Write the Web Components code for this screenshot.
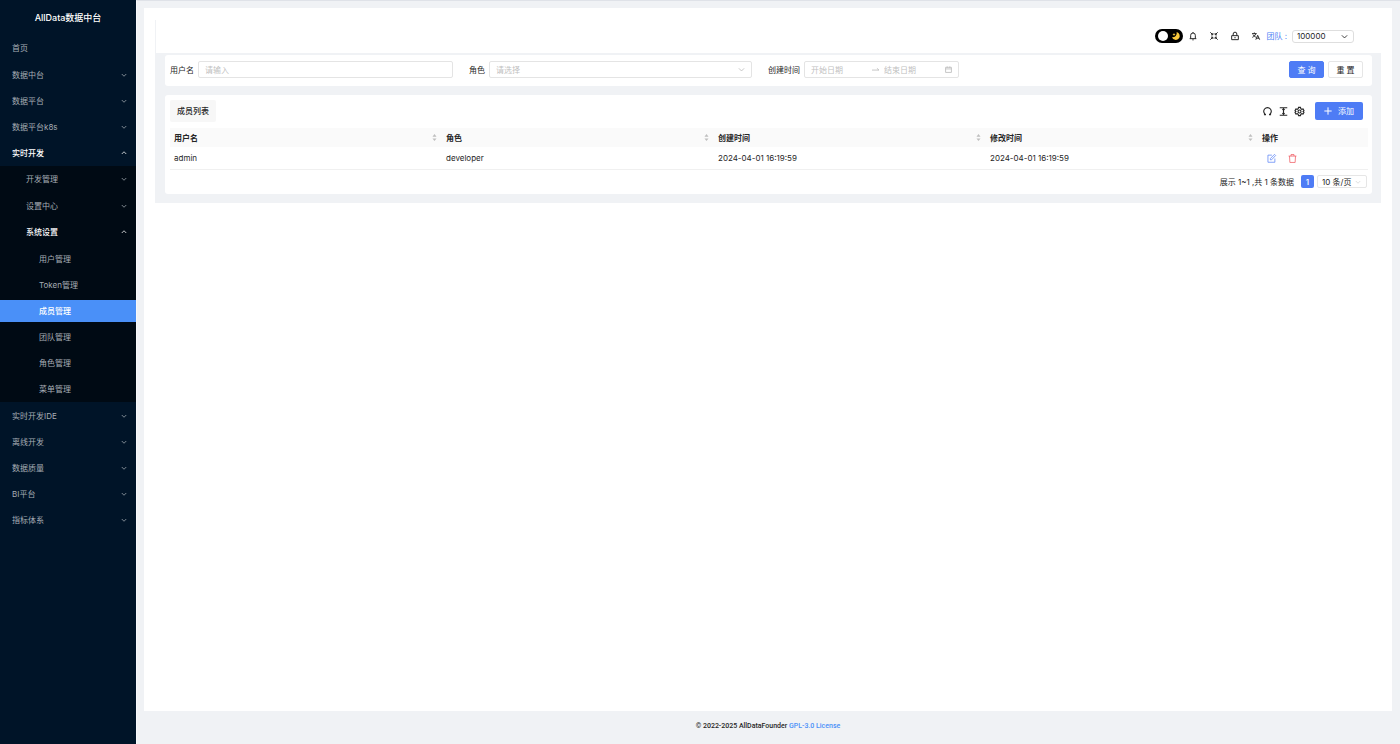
<!DOCTYPE html>
<html lang="zh-CN">
<head>
<meta charset="utf-8">
<title>AllData数据中台</title>
<style>
html, body { margin: 0; min-height: 100%; }
body { font: 8px/12px Inter, "Noto Sans CJK SC", sans-serif; color: #262626; background: #f0f2f5; }
</style>
</head>
<body>
<app-shell>
  <side-menu slot="side"></side-menu>
  <top-bar slot="header"></top-bar>
  <search-form slot="content"></search-form>
  <member-table slot="content"></member-table>
  <page-footer slot="footer"></page-footer>
</app-shell>

<script>
const RESET = `
  *, *::before { box-sizing: border-box; }
  button, input, select { font: inherit; color: inherit; margin: 0; padding: 0; border: 0; background: none; outline: none; }
  button { cursor: pointer; }
  select { appearance: none; cursor: pointer; }
  input::placeholder { color: #bfbfbf; opacity: 1; }
  a { color: inherit; text-decoration: none; }
`;

class BaseElement extends HTMLElement {
  connectedCallback() {
    if (this.shadowRoot) return;
    this.attachShadow({ mode: 'open' });
    const t = document.createElement('template');
    t.innerHTML = `<style>${RESET}${this.styles()}</style>${this.markup()}`;
    this.shadowRoot.append(t.content.cloneNode(true));
  }
  styles() { return ''; }
  markup() { return ''; }
}

const ICONS = {
  down: '<path d="M3 8l9 9 9-9"/>',
  up: '<path d="M3 16l9-9 9 9"/>',
  bell: '<path d="M5 20V10a7 7 0 0 1 14 0v10M2 20h20M10 23.500h4M12 0v3"/>',
  shrink: '<path d="M1 1l7 7M8.500 3v5.500H3M23 1l-7 7M15.500 3v5.500H21M1 23l7-7M8.500 21v-5.500H3M23 23l-7-7M15.500 21v-5.500H21"/>',
  lock: '<path d="M2 11h20v12H2zM6.500 11V6a5.500 5.500 0 0 1 11 0v5M12 15v4"/>',
  translate: '<path d="M0 5h14M7 1.500V5M11.500 5C10 10 6 13.500 1 16M3.500 8c1.500 3.500 4.500 6 8 7.500M11.500 23l5.500-13 6 13M13.500 18.500h7.500"/>',
  refresh: '<path d="M7.500 20.500a10 10 0 1 1 9 0M2.500 20.500h5.500M16 20.500h5.500"/>',
  height: '<path d="M2 2h20M2 22h20M12 4.500v15M9 7.500l3-3 3 3M9 16.500l3 3 3-3"/>',
  gear: '<path d="M9.500 1h5l1 3.600 2.600 1.500 3.400-.9 2.400 4.300L21.500 12l2.400 2.500-2.400 4.300-3.400-.9-2.600 1.500-1 3.600h-5l-1-3.600-2.600-1.500-3.400.9L.1 14.500 2.500 12 .1 9.500l2.400-4.300 3.400.9 2.600-1.500z"/><circle cx="12" cy="12" r="4"/>',
  plus: '<path d="M12 1v22M1 12h22"/>',
  edit: '<path d="M13 3H2.500v19H21V12M9 15.500V12L20 1l3 3-11 11.500z"/>',
  trash: '<path d="M1.500 5.500h21M4 5.500l1 17h14l1-17M8 5.500v-4h8v4"/>',
  calendar: '<path d="M2 4.500h20V22H2zM2 10h20M7.500 1.500v5M16.500 1.500v5"/>',
  swap: '<path d="M0 14h24l-7-6"/>',
  sort: '<path d="M12 0l7 9H5zM12 24l7-9H5z" fill="currentColor" stroke="none"/>',
  moon: '<path d="M14 0A12 12 0 1 1 0 16 13 13 0 0 0 14 0z" fill="#f9c93c" stroke="none"/><path d="M6 3l1.500 3 3 1.500-3 1.500L6 12 4.500 9l-3-1.500 3-1.500z" fill="#f9c93c" stroke="none"/>'
};

customElements.define('ui-icon', class extends BaseElement {
  styles() {
    return `:host { display: inline-flex; flex: none; width: var(--icon-size, 10px); height: var(--icon-size, 10px); pointer-events: none; }
      svg { width: 100%; height: 100%; fill: none; stroke: currentColor; stroke-width: var(--icon-stroke, 2); overflow: visible; }`;
  }
  markup() { return `<svg viewBox="0 0 24 24" aria-hidden="true">${ICONS[this.getAttribute('name')]}</svg>`; }
});

customElements.define('app-shell', class extends BaseElement {
  styles() {
    return `
      :host { display: flex; min-height: 100vh; }
      aside { flex: 0 0 136px; display: flex; background: #001428; }
      .main { flex: 1; min-width: 0; display: flex; flex-direction: column; border-top: 1px solid #dfe2e8; border-left: 1px solid #f8f9fb; padding: 7px 8px 0 7px; }
      main { flex: 1; background: #fff; padding: 12px 11px; }
      .block { background: #f0f2f5; padding: 2px 9px 9px 10px; display: flex; flex-direction: column; gap: 9px; }`;
  }
  markup() {
    return `<aside><slot name="side"></slot></aside>
      <div class="main"><main><slot name="header"></slot><div class="block"><slot name="content"></slot></div></main>
      <slot name="footer"></slot></div>`;
  }
});

customElements.define('menu-item', class extends BaseElement {
  styles() {
    return `
      :host { display: block; padding: 2px 0; }
      a { display: flex; align-items: center; justify-content: space-between; height: 22px; padding: 0 9px 0 var(--indent, 12px); color: #a6adb4; }
      :host([open]) a { color: #fff; font-weight: 500; }
      :host([active]) a { color: #fff; background: #4a90f8; font-weight: 500; }
      ui-icon { --icon-size: 6px; --icon-stroke: 3; }`;
  }
  markup() {
    const arrow = this.getAttribute('arrow');
    return `<a href="#"><slot></slot>${arrow ? `<ui-icon name="${arrow}"></ui-icon>` : ''}</a>`;
  }
});

customElements.define('side-menu', class extends BaseElement {
  styles() {
    return `
      :host { display: block; flex: 1; }
      h1 { margin: 0; font-size: 9px; line-height: 35px; font-weight: 500; text-align: center; color: #fff; }
      nav > menu-item:first-child { margin-bottom: 1px; }
      .sub { background: #000a14; margin-bottom: 1px; --indent: 26px; }
      .leaf { padding-top: 1px; --indent: 39px; }
      .sub > menu-item:first-child { margin-bottom: 1px; }`;
  }
  markup() {
    const item = (label, attrs = 'arrow="down"') => `<menu-item ${attrs}>${label}</menu-item>`;
    const many = labels => labels.map(l => item(l)).join('');
    return `<h1>AllData数据中台</h1>
      <nav>
        ${item('首页', '')}${many(['数据中台', '数据平台', '数据平台k8s'])}${item('实时开发', 'arrow="up" open')}
        <div class="sub">
          ${many(['开发管理', '设置中心'])}${item('系统设置', 'arrow="up" open')}
          <div class="leaf">
            ${item('用户管理', '')}${item('Token管理', '')}${item('成员管理', 'active')}
            ${item('团队管理', '')}${item('角色管理', '')}${item('菜单管理', '')}
          </div>
        </div>
        ${many(['实时开发IDE', '离线开发', '数据质量', 'BI平台', '指标体系'])}
      </nav>`;
  }
});

customElements.define('top-bar', class extends BaseElement {
  styles() {
    return `
      :host { display: flex; align-items: center; justify-content: flex-end; height: 33px; box-sizing: border-box; padding: 0 27px 1px 0; border-left: 1px solid #f0f2f5; }
      .switch { position: relative; display: flex; width: 28px; height: 14px; margin-right: 3px; }
      .switch input { appearance: none; width: 28px; height: 14px; border-radius: 7px; background: #000; }
      .switch input::before { content: ""; display: block; width: 10px; height: 10px; margin: 2px 3px; border-radius: 5px; background: #fff; }
      .switch ui-icon { position: absolute; right: 3px; top: 3px; --icon-size: 8px; }
      .tools { display: flex; gap: 8px; }
      .tools button { display: flex; align-items: center; justify-content: center; width: 13px; height: 14px; --icon-size: 8px; --icon-stroke: 3; }
      label { margin: 0 5px 0 4px; color: #4a80f5; }
      .select { display: flex; align-items: center; width: 62px; height: 13px; border: 1px solid #dedede; border-radius: 3px; }
      select { width: 100%; padding: 0 4px; }
      .select ui-icon { margin-left: -12px; margin-right: 5px; --icon-size: 7px; --icon-stroke: 3; }`;
  }
  markup() {
    return `<span class="switch"><input type="checkbox" role="switch" aria-label="主题"><ui-icon name="moon"></ui-icon></span>
      <div class="tools">
        <button aria-label="通知"><ui-icon name="bell"></ui-icon></button>
        <button aria-label="全屏"><ui-icon name="shrink"></ui-icon></button>
        <button aria-label="锁屏"><ui-icon name="lock"></ui-icon></button>
        <button aria-label="语言"><ui-icon name="translate"></ui-icon></button>
      </div>
      <label for="team">团队 :</label>
      <span class="select"><select id="team"><option>100000</option></select><ui-icon name="down"></ui-icon></span>`;
  }
});

customElements.define('search-form', class extends BaseElement {
  styles() {
    return `
      :host { display: block; background: #fff; border-radius: 3px; padding: 6px 6px 8px 5px; }
      form { display: grid; grid-template-columns: repeat(4, 1fr); height: 17px; }
      .field { display: flex; align-items: center; gap: 4px; padding-right: 16px; }
      label { flex: none; }
      .box { flex: 1; min-width: 0; display: flex; align-items: center; height: 17px; padding: 0 6px; border: 1px solid #e4e4e4; border-radius: 2px; color: #bfbfbf; }
      .box input, .box select { flex: 1; min-width: 0; width: 100%; }
      .range { flex: 0 0 155px; }
      .range .end { margin-left: 5px; }
      .box ui-icon { --icon-size: 7px; --icon-stroke: 3; }
      .actions { display: flex; justify-content: flex-end; gap: 4px; padding-right: 3px; }
      .actions button { width: 35px; height: 17px; border: 1px solid #e6e6e6; border-radius: 2px; }
      .actions .primary { background: #4e7cf5; border-color: #4e7cf5; color: #fff; }`;
  }
  markup() {
    return `<form>
      <div class="field"><label for="name">用户名</label><span class="box"><input id="name" placeholder="请输入"></span></div>
      <div class="field"><label for="role">角色</label><span class="box"><select id="role"><option>请选择</option></select><ui-icon name="down"></ui-icon></span></div>
      <div class="field"><label for="start">创建时间</label><span class="box range"><input id="start" placeholder="开始日期"><ui-icon name="swap"></ui-icon><input class="end" placeholder="结束日期" aria-label="结束日期"><ui-icon name="calendar"></ui-icon></span></div>
      <div class="actions"><button type="button" class="primary">查 询</button><button type="button">重 置</button></div>
    </form>`;
  }
});

customElements.define('member-table', class extends BaseElement {
  styles() {
    return `
      :host { display: block; background: #fff; border-radius: 3px; padding: 5px 4px 6px 5px; }
      .bar { display: flex; align-items: center; height: 22px; padding-right: 5px; }
      h2 { margin: 0 auto 0 0; padding: 0 7px; font-size: 8px; line-height: 22px; font-weight: 500; background: #f7f7f7; border-radius: 2px; }
      .tool { display: flex; margin-right: 7px; --icon-size: 9px; --icon-stroke: 3; }
      .add { display: flex; align-items: center; gap: 6px; height: 18px; margin-left: 4px; padding: 0 9px; background: #4e7cf5; color: #fff; border-radius: 2px; --icon-size: 8px; --icon-stroke: 3; }
      table { width: 100%; margin-top: 6px; border-collapse: separate; border-spacing: 0; table-layout: fixed; }
      th, td { text-align: left; padding: 0 4px; }
      th { height: 19px; background: #fafafa; font-weight: 600; }
      td { height: 23px; border-bottom: 1px solid #f0f0f0; }
      .last { width: 110px; }
      .head { display: flex; align-items: center; justify-content: space-between; }
      .head ui-icon { --icon-size: 7px; color: #bfbfbf; }
      .ops { display: flex; gap: 12px; padding-left: 5px; --icon-size: 9px; }
      .ops button { display: flex; color: #5b84f5; }
      .ops .danger { color: #ef5a62; }
      .pager { display: flex; align-items: center; justify-content: flex-end; height: 13px; margin-top: 5px; padding-right: 1px; }
      .page { width: 13px; height: 13px; margin: 0 3px 0 7px; background: #4e7cf5; color: #fff; border-radius: 2px; font-weight: 500; }
      .size { display: flex; align-items: center; width: 50px; height: 13px; border: 1px solid #e6e6e6; border-radius: 2px; }
      .size select { width: 100%; padding: 0 4px; }
      .size ui-icon { margin: 0 5px 0 -11px; --icon-size: 6px; color: #bfbfbf; }`;
  }
  markup() {
    const th = t => `<th scope="col"><span class="head">${t}<ui-icon name="sort"></ui-icon></span></th>`;
    return `<div class="bar"><h2>成员列表</h2>
        <button class="tool" aria-label="刷新"><ui-icon name="refresh"></ui-icon></button>
        <button class="tool" aria-label="密度"><ui-icon name="height"></ui-icon></button>
        <button class="tool" aria-label="列设置"><ui-icon name="gear"></ui-icon></button>
        <button class="add"><ui-icon name="plus"></ui-icon>添加</button></div>
      <table>
        <thead><tr>${['用户名', '角色', '创建时间', '修改时间'].map(th).join('')}<th scope="col" class="last">操作</th></tr></thead>
        <tbody><tr><td>admin</td><td>developer</td><td>2024-04-01 16:19:59</td><td>2024-04-01 16:19:59</td>
          <td><span class="ops"><button aria-label="编辑"><ui-icon name="edit"></ui-icon></button><button class="danger" aria-label="删除"><ui-icon name="trash"></ui-icon></button></span></td></tr></tbody>
      </table>
      <div class="pager"><span>展示 1~1 ,共 1 条数据</span><button class="page">1</button>
        <span class="size"><select aria-label="每页条数"><option>10 条/页</option></select><ui-icon name="down"></ui-icon></span></div>`;
  }
});

customElements.define('page-footer', class extends BaseElement {
  styles() {
    return `:host { display: block; padding: 9px 0 12px; text-align: center; font: 500 7px/12px Roboto, sans-serif; }
      a { color: #4a90f8; }`;
  }
  markup() { return `<footer>© 2022-2025 AllDataFounder <a href="#">GPL-3.0 License</a></footer>`; }
});
</script>
</body>
</html>
